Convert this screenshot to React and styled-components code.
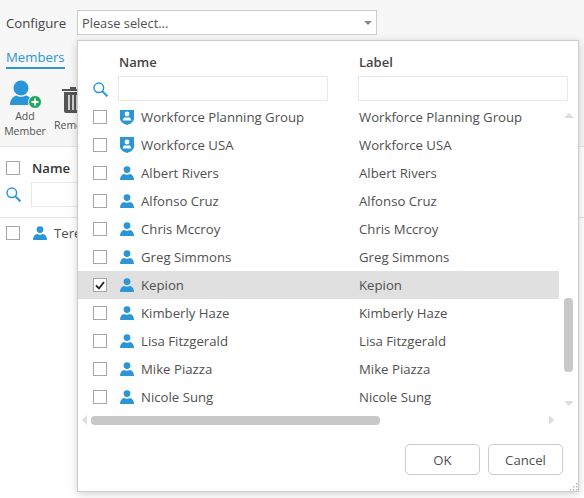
import React from 'react';
import styled, { createGlobalStyle } from 'styled-components';

const GlobalStyle = createGlobalStyle`
  html, body {
    margin: 0;
    padding: 0;
    height: 100%;
    background: #fff;
    color: #505050;
    font-family: 'Open Sans', 'Noto Sans', sans-serif;
    font-size: 13.2px;
    overflow: hidden;
  }
  * { box-sizing: border-box; }
`;

const BLUE = '#2a96d8';

const Page = styled.div`
  position: relative;
  width: 584px;
  height: 498px;
  overflow: hidden;
`;

const Top = styled.div`
  background: #f7f7f7;
  height: 147px;
  border-bottom: 1px solid #e4e4e4;
  padding: 10px 0 0 6px;
`;

const ConfigRow = styled.div`
  display: flex;
  align-items: center;
  height: 25px;
`;

const ConfigLabel = styled.span`
  width: 71px;
  color: #444;
`;

const SelectBox = styled.div`
  width: 300px;
  height: 25px;
  background: #fff;
  border: 1px solid #ccc;
  display: flex;
  align-items: center;
  justify-content: space-between;
  padding: 0 4px 0 4px;
  font-size: 12.8px;
`;

const Caret = styled.span`
  width: 0;
  height: 0;
  border-left: 4px solid transparent;
  border-right: 4px solid transparent;
  border-top: 4px solid #888;
`;

const Tab = styled.div`
  display: inline-block;
  margin-top: 12px;
  color: ${BLUE};
  height: 22px;
  line-height: 20px;
  border-bottom: 2px solid ${BLUE};
`;

const Toolbar = styled.div`
  display: flex;
  gap: 7px;
  margin-top: 11px;
  margin-left: -3px;
`;

const ToolButton = styled.div`
  width: 44px;
  display: flex;
  flex-direction: column;
  align-items: ${(p) => (p.$left ? 'flex-start' : 'center')};
  font-size: 10.5px;
  line-height: 15px;
  text-align: center;
  white-space: nowrap;
`;

const ToolIcon = styled.div`
  height: ${(p) => p.$height}px;
  padding-top: ${(p) => p.$top || 0}px;
  padding-left: ${(p) => p.$indent || 0}px;
`;

const Table = styled.div`
  padding: 13px 0 0 6px;
`;

const HeadRow = styled.div`
  display: flex;
  align-items: center;
  gap: 12px;
  height: 16px;
  font-weight: 600;
  color: #333;
`;

const FilterRow = styled.div`
  display: flex;
  align-items: center;
  gap: 10px;
  margin-top: 6px;
`;

const Input = styled.div`
  height: 25px;
  width: ${(p) => p.$width}px;
  background: #fff;
  border: 1px solid #e8e8e8;
`;

const MemberRow = styled.div`
  display: flex;
  align-items: center;
  height: 30px;
  margin: 10px 0 0 -6px;
  padding-left: 6px;
  border-top: 1px solid #e4e4e4;
`;

const Box = styled.span`
  flex: none;
  width: 14px;
  height: 14px;
  background: #fff;
  border: 1px solid #a6a6a6;
  display: flex;
  align-items: center;
  justify-content: center;
`;

const Cell = styled.div`
  display: flex;
  align-items: center;
  white-space: nowrap;
  width: ${(p) => (p.$width ? `${p.$width}px` : 'auto')};
  svg:first-of-type {
    margin-left: 13px;
  }
  ${Box} svg:first-of-type {
    margin-left: 0;
  }
`;

const CellText = styled.span`
  margin-left: 7px;
`;

const Popup = styled.div`
  position: absolute;
  left: 77px;
  top: 40px;
  width: 502px;
  height: 452px;
  background: #fff;
  border: 1px solid #ccc;
  box-shadow: 0 2px 8px rgba(0, 0, 0, 0.18);
  display: flex;
  flex-direction: column;
`;

const PopupHead = styled.div`
  height: 69px;
  flex: none;
  display: grid;
  grid-template-columns: 40px 240px 210px;
  grid-template-rows: 35px 25px;
  align-items: center;
`;

const ColTitle = styled.div`
  font-weight: 600;
  color: #444;
  font-size: 13px;
  padding-left: 1px;
  padding-top: 6px;
`;

const SearchCell = styled.div`
  padding-left: 15px;
  padding-top: 2px;
  display: flex;
`;

const Body = styled.div`
  display: flex;
  height: 306px;
  flex: none;
`;

const ListColumn = styled.div`
  width: 481px;
  height: 306px;
  overflow: hidden;
`;

const List = styled.div`
  margin-top: -7px;
`;

const Row = styled.div`
  display: flex;
  align-items: center;
  height: 28px;
  padding-left: 15px;
  background: ${(p) => (p.$selected ? '#e0e0e0' : 'transparent')};
`;

const VScroll = styled.div`
  flex: 1;
  display: flex;
  flex-direction: column;
  align-items: center;
  padding-top: 3px;
`;

const arrows = {
  up: 'border-left: 5px solid transparent; border-right: 5px solid transparent; border-bottom: 5px solid #ddd;',
  down: 'border-left: 5px solid transparent; border-right: 5px solid transparent; border-top: 5px solid #ddd;',
  left: 'border-top: 5px solid transparent; border-bottom: 5px solid transparent; border-right: 5px solid #ddd;',
  right: 'border-top: 5px solid transparent; border-bottom: 5px solid transparent; border-left: 5px solid #ddd;',
};

const Arrow = styled.span`
  width: 0;
  height: 0;
  ${(p) => arrows[p.$dir]}
`;

const VThumb = styled.div`
  width: 9px;
  height: 74px;
  border-radius: 4px;
  background: #c8c8c8;
  margin-top: 180px;
  margin-bottom: 29px;
`;

const HScroll = styled.div`
  flex: none;
  height: 10px;
  margin-top: -1px;
  display: flex;
  align-items: center;
  padding-left: 4px;
  width: 476px;
`;

const HTrack = styled.div`
  flex: 1;
  padding: 0 4px;
`;

const HThumb = styled.div`
  width: 289px;
  height: 9px;
  border-radius: 4px;
  background: #c8c8c8;
`;

const Footer = styled.div`
  display: flex;
  justify-content: flex-end;
  gap: 8px;
  padding: 19px 15px 0 0;
`;

const Button = styled.div`
  width: 75px;
  height: 31px;
  border: 1px solid #ccc;
  border-radius: 5px;
  background: #fff;
  display: flex;
  align-items: center;
  justify-content: center;
`;

const Grip = styled.svg`
  position: absolute;
  right: 0;
  bottom: 0;
`;

const Person = () => (
  <svg width="14" height="14" viewBox="0 0 14 14" style={{ flex: 'none' }}>
    <circle cx="7" cy="3.6" r="3.4" fill={BLUE} />
    <path d="M0 14c0-3.600 2-5.600 4-6 1.600 1 4.400 1 6 0 2 .4 4 2.400 4 6z" fill={BLUE} />
  </svg>
);

const Group = () => (
  <svg width="14" height="16" viewBox="0 0 14 16" style={{ flex: 'none' }}>
    <path d="M0 0h14v9.500C14 13 10 15 7 16 4 15 0 13 0 9.500z" fill={BLUE} />
    <circle cx="7" cy="5" r="2.400" fill="#fff" />
    <path d="M2.800 11.500c0-2 1.400-3 2.400-3.200 1 .6 2.600.6 3.600 0 1 .2 2.400 1.200 2.400 3.200z" fill="#fff" />
  </svg>
);

const Search = () => (
  <svg width="15" height="15" viewBox="0 0 15 15" fill="none" stroke={BLUE} strokeWidth="1.500">
    <circle cx="5.800" cy="5.800" r="4.800" />
    <path d="M9.400 9.400l5 5" strokeWidth="2" />
  </svg>
);

const AddMember = () => (
  <svg width="34" height="28" viewBox="0 0 34 28">
    <circle cx="13" cy="8" r="7.500" fill={BLUE} />
    <path d="M2 25c0-5 2.500-8 6-9.500 3 1.800 7 1.800 10 0 3 1 5 2.500 6 5l-4 4.500z" fill={BLUE} />
    <circle cx="27" cy="22" r="6.500" fill="#22a85a" stroke="#f7f7f7" />
    <path d="M27 18.500v7M23.500 22h7" stroke="#fff" strokeWidth="2" />
  </svg>
);

const Trash = () => (
  <svg width="22" height="26" viewBox="0 0 22 26">
    <path d="M8 0h6v2h8v2H0V2h8z" fill="#555" />
    <path d="M2 5h18v19a2 2 0 0 1-2 2H4a2 2 0 0 1-2-2z" fill="#555" />
    <path d="M7 8v15M11 8v15M15 8v15" stroke="#ddd" strokeWidth="1.800" />
  </svg>
);

const Check = () => (
  <svg width="10" height="9" viewBox="0 0 10 9">
    <path d="M1 4.500l3 3 5-6.500" fill="none" stroke="#222" strokeWidth="1.800" />
  </svg>
);

const rows = [
  ['Workforce Planning Group', 'group'],
  ['Workforce USA', 'group'],
  ['Albert Rivers'],
  ['Alfonso Cruz'],
  ['Chris Mccroy'],
  ['Greg Simmons'],
  ['Kepion', 'user', true],
  ['Kimberly Haze'],
  ['Lisa Fitzgerald'],
  ['Mike Piazza'],
  ['Nicole Sung'],
];

const App = () => {
  return (
    <Page>
      <GlobalStyle />
      <Top>
        <ConfigRow>
          <ConfigLabel>Configure</ConfigLabel>
          <SelectBox>
            Please select...
            <Caret />
          </SelectBox>
        </ConfigRow>
        <Tab>Members</Tab>
        <Toolbar>
          <ToolButton>
            <ToolIcon $height={29}>
              <AddMember />
            </ToolIcon>
            Add
            <br />
            Member
          </ToolButton>
          <ToolButton $left>
            <ToolIcon $height={38} $top={7} $indent={8}>
              <Trash />
            </ToolIcon>
            Remove
          </ToolButton>
        </Toolbar>
      </Top>
      <Table>
        <HeadRow>
          <Box />
          Name
        </HeadRow>
        <FilterRow>
          <Search />
          <Input $width={60} />
        </FilterRow>
        <MemberRow>
          <Box />
          <Cell>
            <Person />
            <CellText>Terence</CellText>
          </Cell>
        </MemberRow>
      </Table>
      <Popup>
        <PopupHead>
          <span />
          <ColTitle>Name</ColTitle>
          <ColTitle>Label</ColTitle>
          <SearchCell>
            <Search />
          </SearchCell>
          <Input $width={210} />
          <Input $width={210} />
        </PopupHead>
        <Body>
          <ListColumn>
            <List>
              {rows.map(([name, kind, selected]) => (
                <Row key={name} $selected={selected}>
                  <Cell $width={266}>
                    <Box>{selected && <Check />}</Box>
                    {kind === 'group' ? <Group /> : <Person />}
                    <CellText>{name}</CellText>
                  </Cell>
                  <span>{name}</span>
                </Row>
              ))}
            </List>
          </ListColumn>
          <VScroll>
            <Arrow $dir="up" />
            <VThumb />
            <Arrow $dir="down" />
          </VScroll>
        </Body>
        <HScroll>
          <Arrow $dir="left" />
          <HTrack>
            <HThumb />
          </HTrack>
          <Arrow $dir="right" />
        </HScroll>
        <Footer>
          <Button>OK</Button>
          <Button>Cancel</Button>
        </Footer>
        <Grip width="8" height="8" viewBox="0 0 8 8" fill="#bbb">
          <rect x="6" y="0" width="1.500" height="1.500" />
          <rect x="3" y="3" width="1.500" height="1.500" />
          <rect x="6" y="3" width="1.500" height="1.500" />
          <rect x="0" y="6" width="1.500" height="1.500" />
          <rect x="3" y="6" width="1.500" height="1.500" />
          <rect x="6" y="6" width="1.500" height="1.500" />
        </Grip>
      </Popup>
    </Page>
  );
};

export default App;
